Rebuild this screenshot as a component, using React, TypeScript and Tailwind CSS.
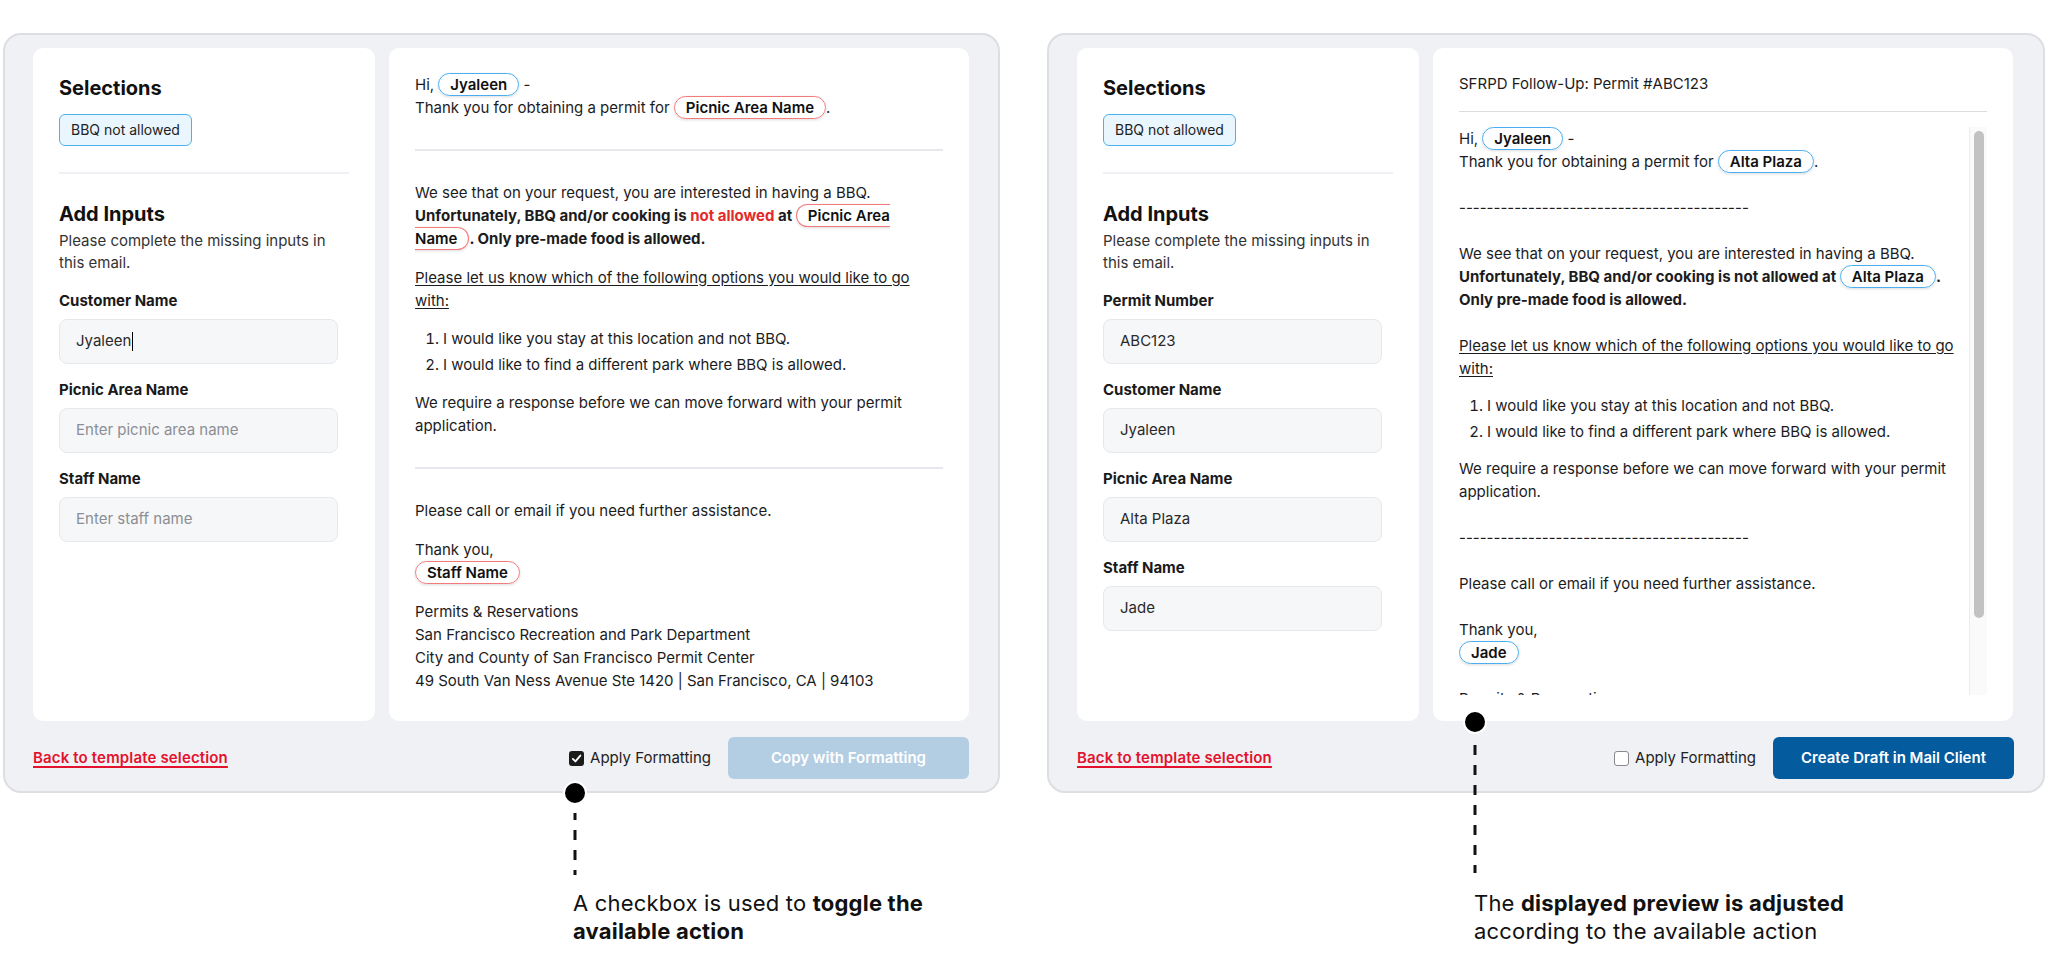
import type { ReactNode } from "react";

type Field = {
  label: string;
  value?: string;
  placeholder?: string;
  caret?: boolean;
};

const formattedFields: Field[] = [
  { label: "Customer Name", value: "Jyaleen", caret: true },
  { label: "Picnic Area Name", placeholder: "Enter picnic area name" },
  { label: "Staff Name", placeholder: "Enter staff name" },
];

const plainFields: Field[] = [
  { label: "Permit Number", value: "ABC123" },
  { label: "Customer Name", value: "Jyaleen" },
  { label: "Picnic Area Name", value: "Alta Plaza" },
  { label: "Staff Name", value: "Jade" },
];

const address = [
  "Permits & Reservations",
  "San Francisco Recreation and Park Department",
  "City and County of San Francisco Permit Center",
  "49 South Van Ness Avenue Ste 1420 | San Francisco, CA | 94103",
];

const dashes = "------------------------------------------";

export default function App() {
  return (
    <div className="relative h-[972px] w-[2048px] overflow-hidden bg-white font-['Inter',sans-serif] text-[#1c1c1e]">
      <div className="flex gap-[47px] pl-[3px] pt-[33px]">
        <Frame
          width="w-[997px]"
          fields={formattedFields}
          preview={<FormattedPreview />}
          checked
          buttonLabel="Copy with Formatting"
          buttonClass="bg-[#b3cde2]"
        />
        <Frame
          width="w-[998px]"
          fields={plainFields}
          preview={<PlainPreview />}
          checked={false}
          buttonLabel="Create Draft in Mail Client"
          buttonClass="bg-[#045b9e]"
        />
      </div>

      {/* callout: checkbox */}
      <Dot className="left-[563px] top-[781px]" />
      <svg className="absolute left-[573px] top-[813px]" width="4" height="62">
        <line x1="2" y1="0" x2="2" y2="62" stroke="#111" strokeWidth="3" strokeDasharray="10 10" strokeDashoffset="3" />
      </svg>
      <p className="absolute left-[573px] top-[889px] w-[460px] text-[22px] leading-[28px] tracking-[0.2px] text-[#111]">
        A checkbox is used to <b className="font-bold">toggle the</b>
        <br />
        <b className="font-bold">available action</b>
      </p>

      {/* callout: preview */}
      <Dot className="left-[1463px] top-[710px]" />
      <svg className="absolute left-[1473px] top-[745px]" width="4" height="128">
        <line x1="2" y1="0" x2="2" y2="128" stroke="#111" strokeWidth="3" strokeDasharray="10 10" />
      </svg>
      <p className="absolute left-[1474px] top-[889px] w-[500px] text-[22px] leading-[28px] tracking-[0.2px] text-[#111]">
        The <b className="font-bold">displayed preview is adjusted</b>
        <br />
        according to the available action
      </p>
    </div>
  );
}

function Dot({ className }: { className: string }) {
  return (
    <span
      className={`absolute h-[24px] w-[24px] rounded-full border-2 border-white bg-black ${className}`}
    />
  );
}

function Frame({
  width,
  fields,
  preview,
  checked,
  buttonLabel,
  buttonClass,
}: {
  width: string;
  fields: Field[];
  preview: ReactNode;
  checked: boolean;
  buttonLabel: string;
  buttonClass: string;
}) {
  return (
    <section
      className={`${width} h-[760px] shrink-0 rounded-[18px] border-2 border-[#dcdee2] bg-[#f0f1f4] pb-[12px] pl-[28px] pr-[29px] pt-[13px]`}
    >
      <div className="flex h-[673px] gap-[14px]">
        <InputsCard fields={fields} />
        <div className="h-full w-[580px] shrink-0 overflow-hidden rounded-[10px] bg-white">
          {preview}
        </div>
      </div>

      <div className="mt-[16px] flex h-[42px] items-center justify-between">
        <a className="text-[15px] font-semibold tracking-[0.15px] text-[#e3132e] underline decoration-[1.5px] underline-offset-[3px]">
          Back to template selection
        </a>
        <div className="flex items-center">
          <label className="flex items-center gap-[6px] text-[15px] text-[#222]">
            {checked ? (
              <span className="flex h-[15px] w-[15px] items-center justify-center rounded-[3px] bg-[#1b1b1b]">
                <svg width="11" height="11" viewBox="0 0 12 12">
                  <path d="M2 6.4 4.8 9.2 10.2 2.8" fill="none" stroke="white" strokeWidth="2" strokeLinecap="round" strokeLinejoin="round" />
                </svg>
              </span>
            ) : (
              <span className="h-[15px] w-[15px] rounded-[3px] border border-[#8a8a8e] bg-white" />
            )}
            Apply Formatting
          </label>
          <button
            type="button"
            className={`ml-[17px] h-[42px] w-[241px] rounded-[6px] text-[15px] font-semibold text-white ${buttonClass}`}
          >
            {buttonLabel}
          </button>
        </div>
      </div>
    </section>
  );
}

function InputsCard({ fields }: { fields: Field[] }) {
  return (
    <div className="flex h-full w-[342px] shrink-0 flex-col rounded-[10px] bg-white px-[26px] pt-[26px]">
      <h2 className="text-[20px] font-bold leading-[28px] text-[#111]">Selections</h2>
      <span className="mt-[12px] w-fit rounded-[6px] border-[1.5px] border-[#4cb0f0] bg-[#eaf6fe] px-[11px] py-[6px] text-[14px] leading-[18px] text-[#222]">
        BBQ not allowed
      </span>
      <div className="mt-[26px] h-[2px] bg-[#eef0f3]" />
      <h2 className="mt-[26px] text-[20px] font-bold leading-[28px] text-[#111]">Add Inputs</h2>
      <p className="mt-[2px] text-[15px] leading-[22px] text-[#333]">
        Please complete the missing inputs in this email.
      </p>
      <div className="mt-[16px] flex flex-col gap-[15px]">
        {fields.map((field) => (
          <div key={field.label}>
            <p className="text-[15px] font-bold leading-[22px] text-[#1a1a1a]">{field.label}</p>
            <div className="mt-[7px] flex h-[45px] w-[279px] items-center rounded-[8px] border border-[#e7e8eb] bg-[#f6f7f9] px-[16px] text-[15px]">
              {field.value ? (
                <span className="text-[#2a2a2a]">{field.value}</span>
              ) : (
                <span className="text-[#8b8e94]">{field.placeholder}</span>
              )}
              {field.caret && <span className="ml-px h-[19px] w-px bg-black" />}
            </div>
          </div>
        ))}
      </div>
    </div>
  );
}

function Tag({ children, red }: { children: ReactNode; red?: boolean }) {
  return (
    <span
      className={`rounded-full border-[1.5px] bg-white px-[11px] py-[1px] font-semibold text-[#111] shadow-[0_1px_3px_rgba(0,0,0,0.14)] ${
        red ? "border-[#f3797b]" : "border-[#4aaef0]"
      }`}
    >
      {children}
    </span>
  );
}

function FormattedPreview() {
  return (
    <div className="px-[26px] pt-[25px] text-[15px] leading-[23px] text-[#1c1c1e]">
      <p>
        Hi, <Tag>Jyaleen</Tag> -
        <br />
        Thank you for obtaining a permit for <Tag red>Picnic Area Name</Tag>.
      </p>

      <div className="my-[30px] h-[2px] bg-[#e7e8eb]" />

      <p>
        We see that on your request, you are interested in having a BBQ.
        <br />
        <b className="font-bold">
          Unfortunately, BBQ and/or cooking is <span className="text-[#e22b2b]">not allowed</span> at{" "}
          <Tag red>Picnic Area Name</Tag>. Only pre-made food is allowed.
        </b>
      </p>
      <p className="mt-[16px] underline underline-offset-2">
        Please let us know which of the following options you would like to go with:
      </p>
      <ol className="my-[15px] list-decimal space-y-[3px] pl-[28px]">
        <li>I would like you stay at this location and not BBQ.</li>
        <li>I would like to find a different park where BBQ is allowed.</li>
      </ol>
      <p>We require a response before we can move forward with your permit application.</p>

      <div className="my-[30px] h-[2px] bg-[#e7e8eb]" />

      <p>Please call or email if you need further assistance.</p>
      <p className="mt-[16px]">
        Thank you,
        <br />
        <Tag red>Staff Name</Tag>
      </p>
      <p className="mt-[16px]">
        {address.map((line) => (
          <span key={line} className="block">
            {line}
          </span>
        ))}
      </p>
    </div>
  );
}

function Blank() {
  return <div className="h-[23px]" />;
}

function PlainPreview() {
  return (
    <div className="flex h-full flex-col px-[26px] pb-[26px] pt-[24px] text-[15px] leading-[23px] text-[#1c1c1e]">
      <p>SFRPD Follow-Up: Permit #ABC123</p>
      <div className="mt-[16px] h-px bg-[#dcdde1]" />
      <div className="mt-[15px] flex min-h-0 flex-1">
        <div className="min-w-0 flex-1 overflow-hidden">
          <p>
            Hi, <Tag>Jyaleen</Tag> -
          </p>
          <p>
            Thank you for obtaining a permit for <Tag>Alta Plaza</Tag>.
          </p>
          <Blank />
          <p>{dashes}</p>
          <Blank />
          <p>We see that on your request, you are interested in having a BBQ.</p>
          <p className="font-bold">
            Unfortunately, BBQ and/or cooking is not allowed at <Tag>Alta Plaza</Tag>. Only pre-made food is allowed.
          </p>
          <Blank />
          <p className="underline underline-offset-2">
            Please let us know which of the following options you would like to go with:
          </p>
          <ol className="my-[14px] list-decimal space-y-[3px] pl-[28px]">
            <li>I would like you stay at this location and not BBQ.</li>
            <li>I would like to find a different park where BBQ is allowed.</li>
          </ol>
          <p>We require a response before we can move forward with your permit application.</p>
          <Blank />
          <p>{dashes}</p>
          <Blank />
          <p>Please call or email if you need further assistance.</p>
          <Blank />
          <p>Thank you,</p>
          <p>
            <Tag>Jade</Tag>
          </p>
          <Blank />
          {address.map((line) => (
            <p key={line}>{line}</p>
          ))}
        </div>
        <div className="w-[18px] shrink-0 border-l border-[#ececec] bg-[#fafafa] pt-[4px]">
          <div className="mx-auto h-[487px] w-[10px] rounded-full bg-[#c2c2c2]" />
        </div>
      </div>
    </div>
  );
}
